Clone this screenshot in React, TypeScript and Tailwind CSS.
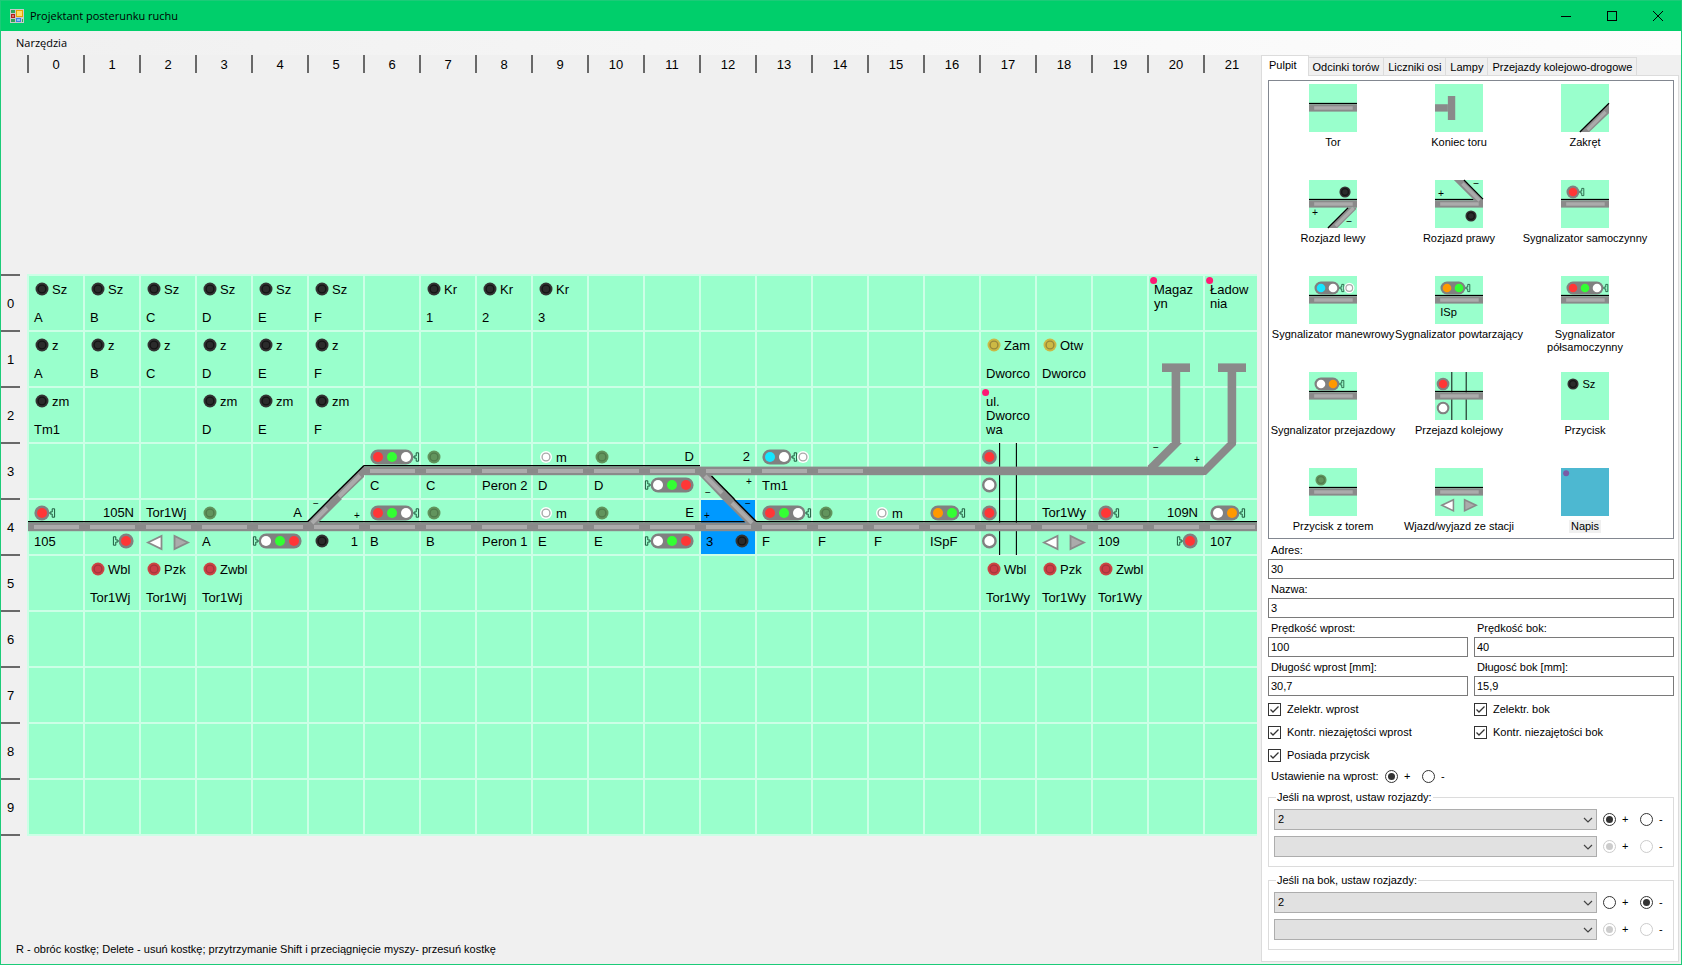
import { type ReactNode } from "react";

const CELL = 56;
const COLS = 22;
const ROWS = 10;

type Elec = { bare?: boolean };

/* ---------- board parts, drawn on a 56 x 56 tile ---------- */

function Label({ x = 6, y = 47, end, children }: { x?: number; y?: number; end?: boolean; children: ReactNode }) {
  return (
    <text x={x} y={y} textAnchor={end ? "end" : "start"} className="fill-black text-[13px]">
      {children}
    </text>
  );
}

function Sign({ x, y, children }: { x: number; y: number; children: string }) {
  return (
    <text x={x} y={y + 3} textAnchor="middle" className="fill-black">
      {children}
    </text>
  );
}

function Track({ bare, plain, from = 0, to = 56 }: { bare?: boolean; plain?: boolean; from?: number; to?: number }) {
  return (
    <g>
      {!bare && <rect x={from} y={22} width={to - from} height={1.4} fill="#000" />}
      <rect x={0} y={23.6} width={56} height={8.6} fill="#8a8a8a" />
      {!plain && <rect x={6} y={26} width={45} height={4} fill="#ababab" />}
    </g>
  );
}

function Bend({ bare }: Elec) {
  return (
    <g>
      <polygon points="56,33 56,23 55,23 22,56 33,56 56,34" fill="#8a8a8a" />
      {!bare && <path d="M22 56L56 22.5" stroke="#000" strokeWidth={1.4} />}
      {!bare && <path d="M31 53.5L52 32.5" stroke="#ababab" strokeWidth={4} />}
    </g>
  );
}

function BareBend() {
  return <polygon points="0,23 23,0 32,0 32,2 2,32 0,32" fill="#8a8a8a" />;
}

function TurnoutLeft({ bare }: Elec) {
  return (
    <g>
      <Track bare={bare} plain={bare} />
      <polygon points="45,32 55,32 55,34 33,56 22,56" fill="#8a8a8a" />
      {!bare && <path d="M45.5 32.5L22 56" stroke="#000" strokeWidth={1.4} />}
      {!bare && <path d="M52 32.5L31 53.5" stroke="#ababab" strokeWidth={4} />}
      <Sign x={7} y={39}>+</Sign>
      <Sign x={47} y={50}>−</Sign>
    </g>
  );
}

function TurnoutUpRight({ bare }: Elec) {
  return (
    <g>
      <Track bare={bare} plain={bare} from={11} />
      <polygon points="0,22.5 22.5,0 34,0 10,24 0,26" fill="#8a8a8a" />
      {!bare && <path d="M-0.5 22.7L22.2 0" stroke="#000" strokeWidth={1.4} />}
      {!bare && <path d="M4 24L19 9" stroke="#ababab" strokeWidth={4} />}
      <Sign x={8} y={5}>−</Sign>
      <Sign x={49} y={17}>+</Sign>
    </g>
  );
}

function TurnoutUpLeft() {
  return (
    <g>
      <Track to={45} />
      <polygon points="22,0 34,0 56,22.5 56,26 46,24" fill="#8a8a8a" />
      <path d="M33.8 0L56 22.3" stroke="#000" strokeWidth={1.4} />
      <path d="M32 4L52 24" stroke="#ababab" strokeWidth={4} />
      <Sign x={7} y={17}>+</Sign>
      <Sign x={48} y={5}>−</Sign>
    </g>
  );
}

function TurnoutDownRight() {
  return (
    <g>
      <Track bare />
      <polygon points="-1,32 11,32 34,56 22,56" fill="#8a8a8a" />
      <path d="M11.5 33L34.2 56" stroke="#000" strokeWidth={1.4} />
      <path d="M5 33L22 50" stroke="#ababab" strokeWidth={4} />
      <Sign x={8} y={50}>−</Sign>
      <Sign x={49} y={39}>+</Sign>
    </g>
  );
}

function BufferStop() {
  return (
    <g fill="#8a8a8a">
      <rect x={0} y={23.6} width={15} height={8.6} />
      <rect x={15} y={14} width={8.6} height={28} />
    </g>
  );
}

const BUTTON_COLORS = {
  black: ["#333333", "#151515", "#2b2b2b"],
  red: ["#cc4444", "#a8353d", "#cc3d47"],
  olive: ["#62945d", "#507a4b", "#62945d"],
  yellow: ["#ccb944", "#99893a", "#ccb944"],
  white: ["#ffffff", "#aaaaaa", "#ffffff"],
} as const;

function Knob({ x = 14, y = 14, color = "black" }: { x?: number; y?: number; color?: keyof typeof BUTTON_COLORS }) {
  const [outer, ring, inner] = BUTTON_COLORS[color];
  return (
    <g>
      <circle cx={x} cy={y} r={color === "white" ? 6 : 6.5} fill={outer} />
      <circle cx={x} cy={y} r={3.9} fill={inner} stroke={ring} strokeWidth={1.4} />
    </g>
  );
}

const LAMP = { r: "#ff3636", g: "#33ff33", w: "#ffffff", o: "#ff9900", b: "#16e6ff" } as const;

function Signal({ lamps, flip, shunt }: { lamps: (keyof typeof LAMP)[]; flip?: boolean; shunt?: boolean }) {
  const end = lamps.length * 14 + 8;
  return (
    <g transform={flip ? "rotate(180 28 28)" : undefined}>
      <rect x={6.4} y={6.5} width={end - 7} height={15} rx={7.5} fill="#808080" />
      {lamps.map((c, i) => (
        <circle key={i} cx={14 + i * 14} cy={14} r={5} fill={LAMP[c]} />
      ))}
      <path
        d={`M${end} 13v2h2.2v3.2h2.4v-8.4h-2.4V13z`}
        fill="none"
        stroke="#1f5a3e"
        strokeWidth={1}
      />
      {shunt && <Knob x={47} color="white" />}
    </g>
  );
}

function CrossingRoad() {
  return <path d="M19.6 0V56M36.4 0V56" stroke="#000" strokeWidth={1.1} />;
}

function CrossingLamps() {
  return (
    <g stroke="#808080" strokeWidth={2.4}>
      <circle cx={9.4} cy={14} r={6.2} fill="#ff3636" />
      <circle cx={9.4} cy={42} r={6.2} fill="#fff" />
    </g>
  );
}

function Arrows() {
  return (
    <g stroke="#8a8a8a" strokeWidth={1.8}>
      <polygon points="8,43.5 21.5,37 21.5,50" fill="#fff" />
      <polygon points="48,43.5 34.5,37 34.5,50" fill="#ababab" />
    </g>
  );
}

function Caption({ lines }: { lines: string[] }) {
  return (
    <g>
      <circle cx={5.6} cy={5.4} r={3.5} fill="#ff1a75" />
      {lines.map((l, i) => (
        <Label key={l} x={6} y={19 + i * 14}>
          {l}
        </Label>
      ))}
    </g>
  );
}

/* ---------- the post's layout ---------- */

type Tile = [col: number, row: number, content: ReactNode];

const named = (text: string, name: string, color: keyof typeof BUTTON_COLORS = "black") => (
  <>
    <Knob color={color} />
    <Label x={24} y={19}>{text}</Label>
    <Label>{name}</Label>
  </>
);

const track = (name: string, extra?: ReactNode) => (
  <>
    <Track />
    <Label>{name}</Label>
    {extra}
  </>
);

const exitSignal = (name: string) => (
  <>
    <Track />
    <Signal lamps={["r", "g", "w"]} flip />
    <Label x={50} y={18} end>{name}</Label>
  </>
);

const shuntKnob = (
  <>
    <Knob color="white" />
    <Label x={24} y={19}>m</Label>
  </>
);

const TILES: Tile[] = [
  ...["A", "B", "C", "D", "E", "F"].map((n, i): Tile => [i, 0, named("Sz", n)]),
  ...["A", "B", "C", "D", "E", "F"].map((n, i): Tile => [i, 1, named("z", n)]),
  ...["1", "2", "3"].map((n, i): Tile => [7 + i, 0, named("Kr", n)]),
  [0, 2, named("zm", "Tm1")],
  [3, 2, named("zm", "D")],
  [4, 2, named("zm", "E")],
  [5, 2, named("zm", "F")],
  [20, 0, <Caption lines={["Magaz", "yn"]} />],
  [21, 0, <Caption lines={["Ładow", "nia"]} />],
  [17, 1, named("Zam", "Dworco", "yellow")],
  [18, 1, named("Otw", "Dworco", "yellow")],
  [17, 2, <Caption lines={["ul.", "Dworco", "wa"]} />],
  [20, 1, <g transform="rotate(-90 28 28)"><BufferStop /></g>],
  [21, 1, <g transform="rotate(-90 28 28)"><BufferStop /></g>],
  [20, 2, <g transform="rotate(-90 28 28)"><Track bare plain /></g>],
  [21, 2, <g transform="rotate(-90 28 28)"><Track bare plain /></g>],

  [5, 3, <Bend />],
  [6, 3, track("C", <Signal lamps={["r", "g", "w"]} />)],
  [7, 3, track("C", <Knob color="olive" />)],
  [8, 3, track("Peron 2")],
  [9, 3, track("D", shuntKnob)],
  [10, 3, track("D", <Knob color="olive" />)],
  [11, 3, exitSignal("D")],
  [12, 3, <><TurnoutDownRight /><Label x={50} y={18} end>2</Label></>],
  [13, 3, <><Track bare /><Signal lamps={["b", "w"]} shunt /><Label>Tm1</Label></>],
  [14, 3, <Track bare />],
  [15, 3, <Track bare plain />],
  [16, 3, <Track bare plain />],
  [17, 3, <><CrossingRoad /><Track bare plain /><CrossingLamps /></>],
  [18, 3, <Track bare plain />],
  [19, 3, <Track bare plain />],
  [20, 3, <TurnoutUpRight bare />],
  [21, 3, <BareBend />],

  [0, 4, track("105", <Signal lamps={["r"]} />)],
  [1, 4, <><Track /><Signal lamps={["r"]} flip /><Label x={50} y={18} end>105N</Label></>],
  [2, 4, <><Track /><Arrows /><Label y={18}>Tor1Wj</Label></>],
  [3, 4, track("A", <Knob color="olive" />)],
  [4, 4, exitSignal("A")],
  [5, 4, <><TurnoutUpRight /><Knob y={42} /><Label x={50} end>1</Label></>],
  [6, 4, track("B", <Signal lamps={["r", "g", "w"]} />)],
  [7, 4, track("B", <Knob color="olive" />)],
  [8, 4, track("Peron 1")],
  [9, 4, track("E", shuntKnob)],
  [10, 4, track("E", <Knob color="olive" />)],
  [11, 4, exitSignal("E")],
  [12, 4, <><rect x={1} y={1} width={54} height={54} fill="#0099ff" /><TurnoutUpLeft /><Label>3</Label><Knob x={42} y={42} /></>],
  [13, 4, track("F", <Signal lamps={["r", "g", "w"]} />)],
  [14, 4, track("F", <Knob color="olive" />)],
  [15, 4, track("F", shuntKnob)],
  [16, 4, track("ISpF", <Signal lamps={["o", "g"]} />)],
  [17, 4, <><CrossingRoad /><Track /><CrossingLamps /></>],
  [18, 4, <><Track /><Arrows /><Label y={18}>Tor1Wy</Label></>],
  [19, 4, track("109", <Signal lamps={["r"]} />)],
  [20, 4, <><Track /><Signal lamps={["r"]} flip /><Label x={50} y={18} end>109N</Label></>],
  [21, 4, track("107", <Signal lamps={["w", "o"]} />)],

  [1, 5, named("Wbl", "Tor1Wj", "red")],
  [2, 5, named("Pzk", "Tor1Wj", "red")],
  [3, 5, named("Zwbl", "Tor1Wj", "red")],
  [17, 5, named("Wbl", "Tor1Wy", "red")],
  [18, 5, named("Pzk", "Tor1Wy", "red")],
  [19, 5, named("Zwbl", "Tor1Wy", "red")],
];

function Board() {
  const w = COLS * CELL;
  const h = ROWS * CELL;
  return (
    <svg
      width={w + 2}
      height={h + 2}
      viewBox={`-1 -1 ${w + 2} ${h + 2}`}
      className="block shrink-0 text-[10px]"
      role="img"
      aria-label="Pulpit"
    >
      <rect width={w} height={h} fill="#99ffcc" />
      <g stroke="#ccffe6" strokeWidth={2}>
        {Array.from({ length: COLS + 1 }, (_, i) => (
          <path key={i} d={`M${i * CELL} -1V${h + 1}`} />
        ))}
        {Array.from({ length: ROWS + 1 }, (_, i) => (
          <path key={i} d={`M-1 ${i * CELL}H${w + 1}`} />
        ))}
      </g>
      {TILES.map(([c, r, content]) => (
        <g key={`${c}-${r}`} transform={`translate(${c * CELL} ${r * CELL})`}>
          {content}
        </g>
      ))}
    </svg>
  );
}

/* ---------- palette ---------- */

const PALETTE: [string, ReactNode][] = [
  ["Tor", <Track />],
  ["Koniec toru", <BufferStop />],
  ["Zakręt", <Bend />],
  ["Rozjazd lewy", <><TurnoutLeft /><Knob x={42} /></>],
  ["Rozjazd prawy", <><TurnoutUpLeft /><Knob x={42} y={42} /></>],
  ["Sygnalizator samoczynny", <><Track /><Signal lamps={["r"]} /></>],
  ["Sygnalizator manewrowy", <><Track /><Signal lamps={["b", "w"]} shunt /></>],
  ["Sygnalizator powtarzający", <><Track /><Signal lamps={["o", "g"]} /><Label>ISp</Label></>],
  ["Sygnalizator półsamoczynny", <><Track /><Signal lamps={["r", "g", "w"]} /></>],
  ["Sygnalizator przejazdowy", <><Track /><Signal lamps={["w", "o"]} /></>],
  ["Przejazd kolejowy", <><CrossingRoad /><Track /><CrossingLamps /></>],
  ["Przycisk", <><Knob /><Label x={25} y={19}>Sz</Label></>],
  ["Przycisk z torem", <><Track /><Knob color="olive" /></>],
  ["Wjazd/wyjazd ze stacji", <><Track /><Arrows /></>],
  ["Napis", <circle cx={6} cy={6} r={3.5} fill="#7a5ba6" />],
];

function Palette() {
  return (
    <div className="grid h-[459px] auto-rows-[96px] grid-cols-[repeat(3,126px)] overflow-hidden border border-[#828790] bg-white pt-[3px] pl-px">
      {PALETTE.map(([name, art]) => {
        const selected = name === "Napis";
        return (
          <button key={name} type="button" className="flex flex-col items-center gap-1">
            <svg width={48} height={48} viewBox="0 0 56 56" className="block shrink-0 overflow-visible text-[12px]" aria-hidden="true">
              <rect width={56} height={56} fill={selected ? "#4db8d1" : "#99ffcc"} />
              {art}
            </svg>
            <span
              className={
                selected
                  ? "bg-[#f0f0f0] px-[2px] leading-[13px]"
                  : name.endsWith("półsamoczynny")
                    ? "w-20 leading-[13px]"
                    : "leading-[13px] whitespace-nowrap"
              }
            >
              {name}
            </span>
          </button>
        );
      })}
    </div>
  );
}

/* ---------- form controls ---------- */

function Field({ id, label, value }: { id: string; label: string; value: string }) {
  return (
    <div className="flex min-w-0 flex-1 flex-col">
      <label htmlFor={id} className="pt-[2px] pl-[3px] leading-[17px]">{label}</label>
      <input
        id={id}
        defaultValue={value}
        className="h-5 w-full border border-[#7a7a7a] bg-white px-[2px] outline-none"
      />
    </div>
  );
}

function Check({ label }: { label: string }) {
  return (
    <label className="flex h-[23px] flex-1 items-center gap-[6px]">
      <span className="relative flex">
        <input type="checkbox" defaultChecked className="peer size-[13px] appearance-none border border-[#333] bg-white" />
        <svg viewBox="0 0 13 13" className="pointer-events-none absolute inset-0 hidden size-[13px] peer-checked:block" aria-hidden="true">
          <path d="M2.5 6.5L5 9L10.5 3.5" fill="none" stroke="#333" strokeWidth={1.3} />
        </svg>
      </span>
      {label}
    </label>
  );
}

function Radio({ name, label, checked, disabled }: { name: string; label: string; checked?: boolean; disabled?: boolean }) {
  return (
    <label className="flex w-[29px] shrink-0 items-center gap-[6px]">
      <input
        type="radio"
        name={name}
        defaultChecked={checked}
        disabled={disabled}
        className="grid size-[13px] shrink-0 appearance-none place-content-center rounded-full border border-[#333] bg-white before:size-[7px] before:rounded-full before:content-[''] checked:before:bg-[#333] disabled:border-[#ccc] disabled:checked:before:bg-[#ccc]"
      />
      {label}
    </label>
  );
}

function SwitchRow({ name, value, sign, disabled }: { name: string; value: string; sign: "+" | "-"; disabled?: boolean }) {
  return (
    <div className="flex items-center gap-[6px]">
      <div className="relative flex flex-1">
        <select
          aria-label={name}
          defaultValue={value}
          className="h-[21px] w-full appearance-none border border-[#adadad] bg-[#e1e1e1] px-[3px] outline-none"
        >
          <option value={value}>{value}</option>
        </select>
        <svg width={10} height={6} viewBox="0 0 10 6" className="pointer-events-none absolute top-2 right-1" aria-hidden="true">
          <path d="M1 1L5 5L9 1" fill="none" stroke="#444" strokeWidth={1.2} />
        </svg>
      </div>
      <div className="flex gap-2">
        <Radio name={name} label="+" checked={sign === "+"} disabled={disabled} />
        <Radio name={name} label="-" checked={sign === "-"} disabled={disabled} />
      </div>
    </div>
  );
}

function SwitchGroup({ title, name, sign }: { title: string; name: string; sign: "+" | "-" }) {
  return (
    <fieldset className="min-w-0 border border-[#dcdcdc] pr-1 pb-[9px] pl-[5px]">
      <legend className="ml-[2px] px-px leading-[13px]">{title}</legend>
      <div className="flex flex-col gap-[6px] pt-[5px]">
        <SwitchRow name={`${name}-1`} value="2" sign={sign} />
        <SwitchRow name={`${name}-2`} value="" sign="+" disabled />
      </div>
    </fieldset>
  );
}

function Tabs() {
  return (
    <div role="tablist" className="flex h-5 items-end">
      <button
        type="button"
        role="tab"
        aria-selected="true"
        className="relative z-10 -mb-px h-[21px] border border-b-0 border-[#dcdcdc] bg-white pr-[11px] pb-[2px] pl-[7px]"
      >
        Pulpit
      </button>
      {["Odcinki torów", "Liczniki osi", "Lampy", "Przejazdy kolejowo-drogowe"].map((t) => (
        <button
          key={t}
          type="button"
          role="tab"
          aria-selected="false"
          className="h-[18px] border border-b-0 border-l-0 border-[#dcdcdc] bg-[#f0f0f0] px-1 pt-px whitespace-nowrap"
        >
          {t}
        </button>
      ))}
    </div>
  );
}

function SidePanel() {
  return (
    <aside className="flex w-[424px] shrink-0 flex-col pr-[2px] pb-[2px] pl-1">
      <Tabs />
      <div className="flex flex-1 flex-col border border-[#dcdcdc] bg-white pt-1 pr-1 pl-[6px]">
        <Palette />
        <form className="flex flex-col pt-px">
          <Field id="adres" label="Adres:" value="30" />
          <Field id="nazwa" label="Nazwa:" value="3" />
          <div className="flex gap-[6px]">
            <Field id="v-wprost" label="Prędkość wprost:" value="100" />
            <Field id="v-bok" label="Prędkość bok:" value="40" />
          </div>
          <div className="flex gap-[6px]">
            <Field id="l-wprost" label="Długość wprost [mm]:" value="30,7" />
            <Field id="l-bok" label="Długosć bok [mm]:" value="15,9" />
          </div>
          <div className="mt-[2px] grid grid-cols-2 gap-x-[6px]">
            <Check label="Zelektr. wprost" />
            <Check label="Zelektr. bok" />
            <Check label="Kontr. niezajętości wprost" />
            <Check label="Kontr. niezajętości bok" />
            <Check label="Posiada przycisk" />
          </div>
          <div className="flex h-[18px] items-center gap-2 pl-[3px]">
            <span className="w-[106px] whitespace-nowrap">Ustawienie na wprost:</span>
            <Radio name="wprost" label="+" checked />
            <Radio name="wprost" label="-" />
          </div>
          <div className="mt-[6px] flex flex-col gap-[7px]">
            <SwitchGroup title="Jeśli na wprost, ustaw rozjazdy:" name="wprost-rozjazd" sign="+" />
            <SwitchGroup title="Jeśli na bok, ustaw rozjazdy:" name="bok-rozjazd" sign="-" />
          </div>
        </form>
      </div>
    </aside>
  );
}

/* ---------- window chrome ---------- */

function TitleBar() {
  return (
    <header className="flex h-[30px] items-center bg-[#00cf6b] pl-[9px] font-['Open_Sans',sans-serif] text-[11px]">
      <svg width={14} height={14} viewBox="0 0 14 14" aria-hidden="true">
        <rect width={14} height={14} fill="#c9c9c9" />
        <rect x={1} y={1} width={4} height={3} fill="#2fa45a" />
        <rect x={1} y={10} width={4} height={3} fill="#2fa45a" />
        <rect x={12} y={10} width={1} height={3} fill="#2fa45a" />
        <rect x={1} y={5} width={4} height={4} fill="#b3201c" />
        <rect x={2} y={6} width={2} height={2} fill="#e2726a" />
        <rect x={6} y={1} width={7} height={7} fill="#e6a400" />
        <rect x={7} y={2} width={5} height={5} fill="#ffdf6b" />
        <rect x={6} y={9} width={5} height={4} fill="#3f7fe0" />
        <rect x={7} y={10} width={3} height={2} fill="#8fbcff" />
      </svg>
      <h1 className="ml-[6px] flex-1">Projektant posterunku ruchu</h1>
      <button type="button" aria-label="Minimalizuj" className="grid h-full w-[46px] place-items-center">
        <svg width={10} height={10} viewBox="0 0 10 10"><path d="M0 5.5H10" stroke="#000" /></svg>
      </button>
      <button type="button" aria-label="Maksymalizuj" className="grid h-full w-[46px] place-items-center">
        <svg width={10} height={10} viewBox="0 0 10 10"><rect x={0.5} y={0.5} width={9} height={9} fill="none" stroke="#000" /></svg>
      </button>
      <button type="button" aria-label="Zamknij" className="grid h-full w-[46px] place-items-center">
        <svg width={10} height={10} viewBox="0 0 10 10"><path d="M0 0L10 10M10 0L0 10" stroke="#000" /></svg>
      </button>
    </header>
  );
}

export default function App() {
  return (
    <div className="flex min-h-screen flex-col border border-[#1ccb78] bg-[#f0f0f0] font-['Liberation_Sans',sans-serif] text-[11px] text-black">
      <TitleBar />
      <nav className="flex h-6 items-center bg-linear-to-r from-[#f0f0f0] to-[#fdfdfd] pl-[15px] font-['Open_Sans',sans-serif]">
        <button type="button">Narzędzia</button>
      </nav>
      <div className="flex flex-1">
        <main className="flex min-w-0 flex-1 flex-col overflow-hidden">
          <div className="flex h-[18px] pl-[26px] text-[13px]">
            {Array.from({ length: COLS }, (_, i) => (
              <div key={i} className="w-14 shrink-0 border-l-2 border-[#696969] text-center leading-5">
                {i}
              </div>
            ))}
          </div>
          <div className="flex pt-[201px]">
            <div className="mr-[7px] flex w-[19px] shrink-0 flex-col border-b-2 border-[#696969] text-[13px]">
              {Array.from({ length: ROWS }, (_, i) => (
                <div key={i} className="flex h-14 items-center justify-center border-t-2 border-[#696969] pt-px">
                  {i}
                </div>
              ))}
            </div>
            <Board />
          </div>
          <p className="mt-auto pb-2 pl-[15px] leading-[14px]">
            R - obróc kostkę; Delete - usuń kostkę; przytrzymanie Shift i przeciągnięcie myszy- przesuń kostkę
          </p>
        </main>
        <SidePanel />
      </div>
    </div>
  );
}
